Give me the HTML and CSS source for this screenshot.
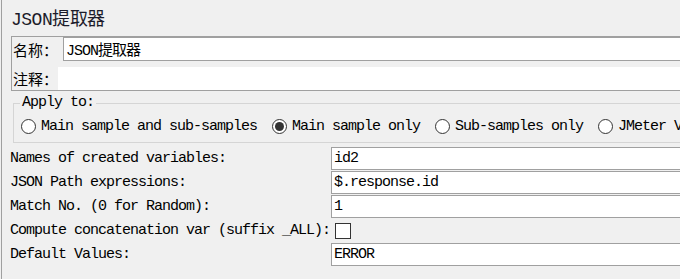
FILE: index.html
```html
<!DOCTYPE html>
<html lang="zh-CN">

<head>
    <meta charset="UTF-8">
    <link rel="stylesheet" href="styles.css">
</head>

<body>
    <div class="panel">
        <div class="title">JSON提取器</div>

        <div class="name-box">
            <div class="name-row">
                <span class="cn-label">名称：</span>
                <div class="text-field name-field">JSON提取器</div>
            </div>
            <div class="comment-row">
                <span class="cn-label">注释：</span>
                <div class="comment-field"></div>
            </div>
        </div>

        <fieldset class="apply-to">
            <legend>Apply to:</legend>
            <div class="radio-group">
                <label class="radio"><span class="circle"></span>Main sample and sub-samples</label>
                <label class="radio"><span class="circle checked"></span>Main sample only</label>
                <label class="radio"><span class="circle"></span>Sub-samples only</label>
                <label class="radio"><span class="circle"></span>JMeter V</label>
            </div>
        </fieldset>

        <div class="form-grid">
            <span class="label">Names of created variables:</span>
            <div class="text-field">id2</div>

            <span class="label">JSON Path expressions:</span>
            <div class="text-field">$.response.id</div>

            <span class="label">Match No. (0 for Random):</span>
            <div class="text-field">1</div>

            <span class="label">Compute concatenation var (suffix _ALL):</span>
            <div class="check-cell"><span class="checkbox"></span></div>

            <span class="label">Default Values:</span>
            <div class="text-field">ERROR</div>
        </div>
    </div>
</body>

</html>
```

FILE: styles.css
```css
body {
    margin: 0;
    background-color: #f0f0f0;
    overflow: hidden;
    font-family: "Liberation Mono", Cousine, "Courier New", "DejaVu Sans Mono", monospace;
    font-size: 15px;
    letter-spacing: -1px;
    color: #000;
}

.panel {
    width: 720px;
    height: 279px;
    margin-left: 1px;
    border-left: 1px solid #a0a0a0;
}

.title {
    padding-left: 9px;
    height: 36px;
    line-height: 40px;
    font-size: 18px;
    letter-spacing: -0.5px;
    color: #1c1c2a;
}

.cjk {
    font-family: "Noto Sans CJK SC", sans-serif;
}

/* 名称 / 注释 */
.name-box {
    margin-left: 9px;
    border: 1px solid #a0a0a0;
    border-right: none;
}

.name-row,
.comment-row {
    display: flex;
    align-items: center;
}

.cn-label {
    font-family: "Noto Sans CJK SC", sans-serif;
    font-size: 15px;
    letter-spacing: 0;
    padding-left: 1px;
}

.name-row .cn-label {
    width: 50px;
}

.comment-row {
    margin-top: 6px;
}

.comment-row .cn-label {
    width: 45px;
}

.name-field {
    flex: 1;
    height: 24px;
}

.comment-field {
    flex: 1;
    height: 23px;
    background-color: #fff;
}

/* Apply to */
.apply-to {
    margin: 4px 0 0 11px;
    padding: 5px 7px 6px;
    border: 1px solid #d5d5d5;
    border-right: none;
}

.apply-to legend {
    padding: 0 2px;
    margin-left: -1px;
    line-height: 16px;
}

.radio-group {
    display: flex;
    align-items: center;
    white-space: nowrap;
    height: 20px;
}

.radio {
    display: flex;
    align-items: center;
    margin-right: 15px;
}

.circle {
    box-sizing: border-box;
    width: 15px;
    height: 15px;
    margin-right: 5px;
    border: 1px solid #333;
    border-radius: 50%;
    background-color: #fff;
    position: relative;
}

.circle.checked::after {
    content: "";
    position: absolute;
    left: 2px;
    top: 2px;
    width: 9px;
    height: 9px;
    border-radius: 50%;
    background-color: #333;
}

/* fields */
.form-grid {
    display: grid;
    grid-template-columns: max-content 1fr;
    grid-auto-rows: 23px;
    column-gap: 1px;
    row-gap: 1px;
    margin-top: 4px;
    padding-left: 8px;
}

.label {
    display: flex;
    align-items: center;
    white-space: nowrap;
}

.text-field {
    box-sizing: border-box;
    display: flex;
    align-items: center;
    padding-left: 2px;
    border: 1px solid #a0a0a0;
    border-right: none;
    background-color: #fff;
    white-space: nowrap;
}

.check-cell {
    display: flex;
    align-items: center;
}

.checkbox {
    box-sizing: border-box;
    width: 16px;
    height: 16px;
    margin-left: 4px;
    border: 1px solid #333;
    background-color: #fff;
}
```
